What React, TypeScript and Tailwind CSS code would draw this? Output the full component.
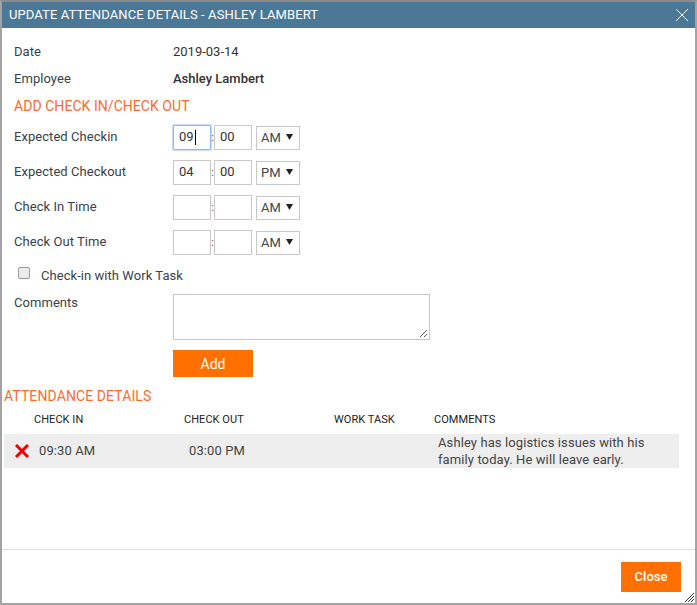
const label = "w-[159px] shrink-0 text-[13px] tracking-[0.05px] text-[#3a3f4b]";

function TimeRow({ name, hour, minute, period, focused }: { name: string; hour?: string; minute?: string; period: string; focused?: boolean }) {
  return (
    <div className="mt-[11px] flex h-[24px] items-center first:mt-0">
      <div className={label}>{name}</div>
      <div
        className={`flex h-[25px] w-[38px] items-center border pl-[5px] text-[13px] text-[#333] ${
          focused ? "rounded-[1px] border-[#8fb8f6] shadow-[0_0_1px_1px_#c4d9fa]" : "border-[#c8c8c8]"
        }`}
      >
        {hour}
        {focused && <span className="ml-[1px] h-[15px] w-px bg-black" />}
      </div>
      <span className="w-[3px] text-center text-[11px] leading-none text-[#8a3a2a]">:</span>
      <div className="flex h-[25px] w-[38px] items-center border border-[#c8c8c8] pl-[5px] text-[13px] text-[#333]">{minute}</div>
      <div className="relative ml-[4px] mt-[1px] flex h-[24px] w-[44px] items-center border border-[#c8c8c8] pl-[4px] text-[13px] text-[#444]">
        {period}
        <svg className="absolute right-[6px] top-[7px]" width="7" height="6" viewBox="0 0 7 6" fill="#222">
          <path d="M0 0 H7 L3.5 6 Z" />
        </svg>
      </div>
    </div>
  );
}

export default function App() {
  return (
    <div className="relative flex h-[605px] w-[697px] flex-col border-2 border-[#a3a3a3] border-t-[#8c8c8c] bg-white font-['Roboto',sans-serif]">
      <div className="flex h-[26px] shrink-0 items-center justify-between bg-[#4a7896] pl-[7px] pr-[6px] text-[13px] tracking-[0.1px] text-white">
        <span>UPDATE ATTENDANCE DETAILS - ASHLEY LAMBERT</span>
        <svg width="14" height="14" viewBox="0 0 14 14" stroke="white" strokeWidth="1">
          <path d="M1 1 L13 13 M13 1 L1 13" />
        </svg>
      </div>

      <div className="flex flex-1 flex-col">
        <div className="px-[12px] pt-[15px]">
          <div className="flex h-[18px] items-center">
            <div className={label}>Date</div>
            <div className="text-[13px] text-[#333]">2019-03-14</div>
          </div>
          <div className="mt-[9px] flex h-[18px] items-center">
            <div className={label}>Employee</div>
            <div className="text-[13px] font-medium text-[#333]">Ashley Lambert</div>
          </div>
          <div className="mt-[9px] h-[18px] text-[14px] leading-[18px] tracking-[0.05px] text-[#ff6a2b]">ADD CHECK IN/CHECK OUT</div>

          <div className="mt-[10px]">
            <TimeRow name="Expected Checkin" hour="09" minute="00" period="AM" focused />
            <TimeRow name="Expected Checkout" hour="04" minute="00" period="PM" />
            <TimeRow name="Check In Time" period="AM" />
            <TimeRow name="Check Out Time" period="AM" />
          </div>

          <div className="mt-[12px] flex h-[18px] items-center pl-[4px]">
            <span className="-mt-[4px] h-[12px] w-[12px] rounded-[2px] border border-[#9a9a9a] bg-[#ececec]" />
            <span className="ml-[11px] mt-[2px] text-[13px] tracking-[0.05px] text-[#3a3f4b]">Check-in with Work Task</span>
          </div>

          <div className="mt-[10px] flex">
            <div className={`${label} -mt-[1px]`}>Comments</div>
            <div className="relative h-[46px] w-[257px] border border-[#c8c8c8]">
              <svg className="absolute bottom-[1px] right-[1px]" width="9" height="9" viewBox="0 0 9 9" stroke="#555" strokeWidth="1">
                <path d="M1 8 L8 1 M5 8 L8 5" />
              </svg>
            </div>
          </div>

          <div className="ml-[159px] mt-[10px] flex h-[27px] w-[80px] items-center justify-center bg-[#ff7000] pt-[1px] text-[14px] text-white">
            Add
          </div>
        </div>

        <div className="mt-[10px] px-[2px] text-[14px] leading-[18px] tracking-[0.1px] text-[#ff6a2b]">ATTENDANCE DETAILS</div>

        <div className="mt-[7px] flex h-[16px] items-center pl-[32px] text-[11px] tracking-[0.05px] text-[#222]">
          <div className="w-[150px]">CHECK IN</div>
          <div className="w-[150px]">CHECK OUT</div>
          <div className="w-[100px]">WORK TASK</div>
          <div>COMMENTS</div>
        </div>

        <div className="ml-[2px] mr-[16px] mt-[6px] flex h-[34px] items-center bg-[#eeeeee] text-[13px] tracking-[0.1px] text-[#444]">
          <svg className="ml-[11px] shrink-0" width="14" height="14" viewBox="0 0 14 14" stroke="#f00000" strokeWidth="3">
            <path d="M1 1 L13 13 M13 1 L1 13" />
          </svg>
          <div className="ml-[10px] w-[150px]">09:30 AM</div>
          <div className="w-[249px]">03:00 PM</div>
          <div className="w-[225px] leading-[17px]">Ashley has logistics issues with his family today. He will leave early.</div>
        </div>

        <div className="mt-auto flex h-[54px] items-center justify-end border-t border-[#dddddd] pr-[14px]">
          <div className="flex h-[30px] w-[60px] items-center justify-center bg-[#ff7000] text-[13px] font-medium text-white">
            Close
          </div>
        </div>
      </div>

      <svg className="absolute bottom-0 right-0" width="11" height="11" viewBox="0 0 11 11" stroke="#333" strokeWidth="1">
        <path d="M1 10 L10 1 M4 10 L10 4 M7 10 L10 7" />
      </svg>
    </div>
  );
}
